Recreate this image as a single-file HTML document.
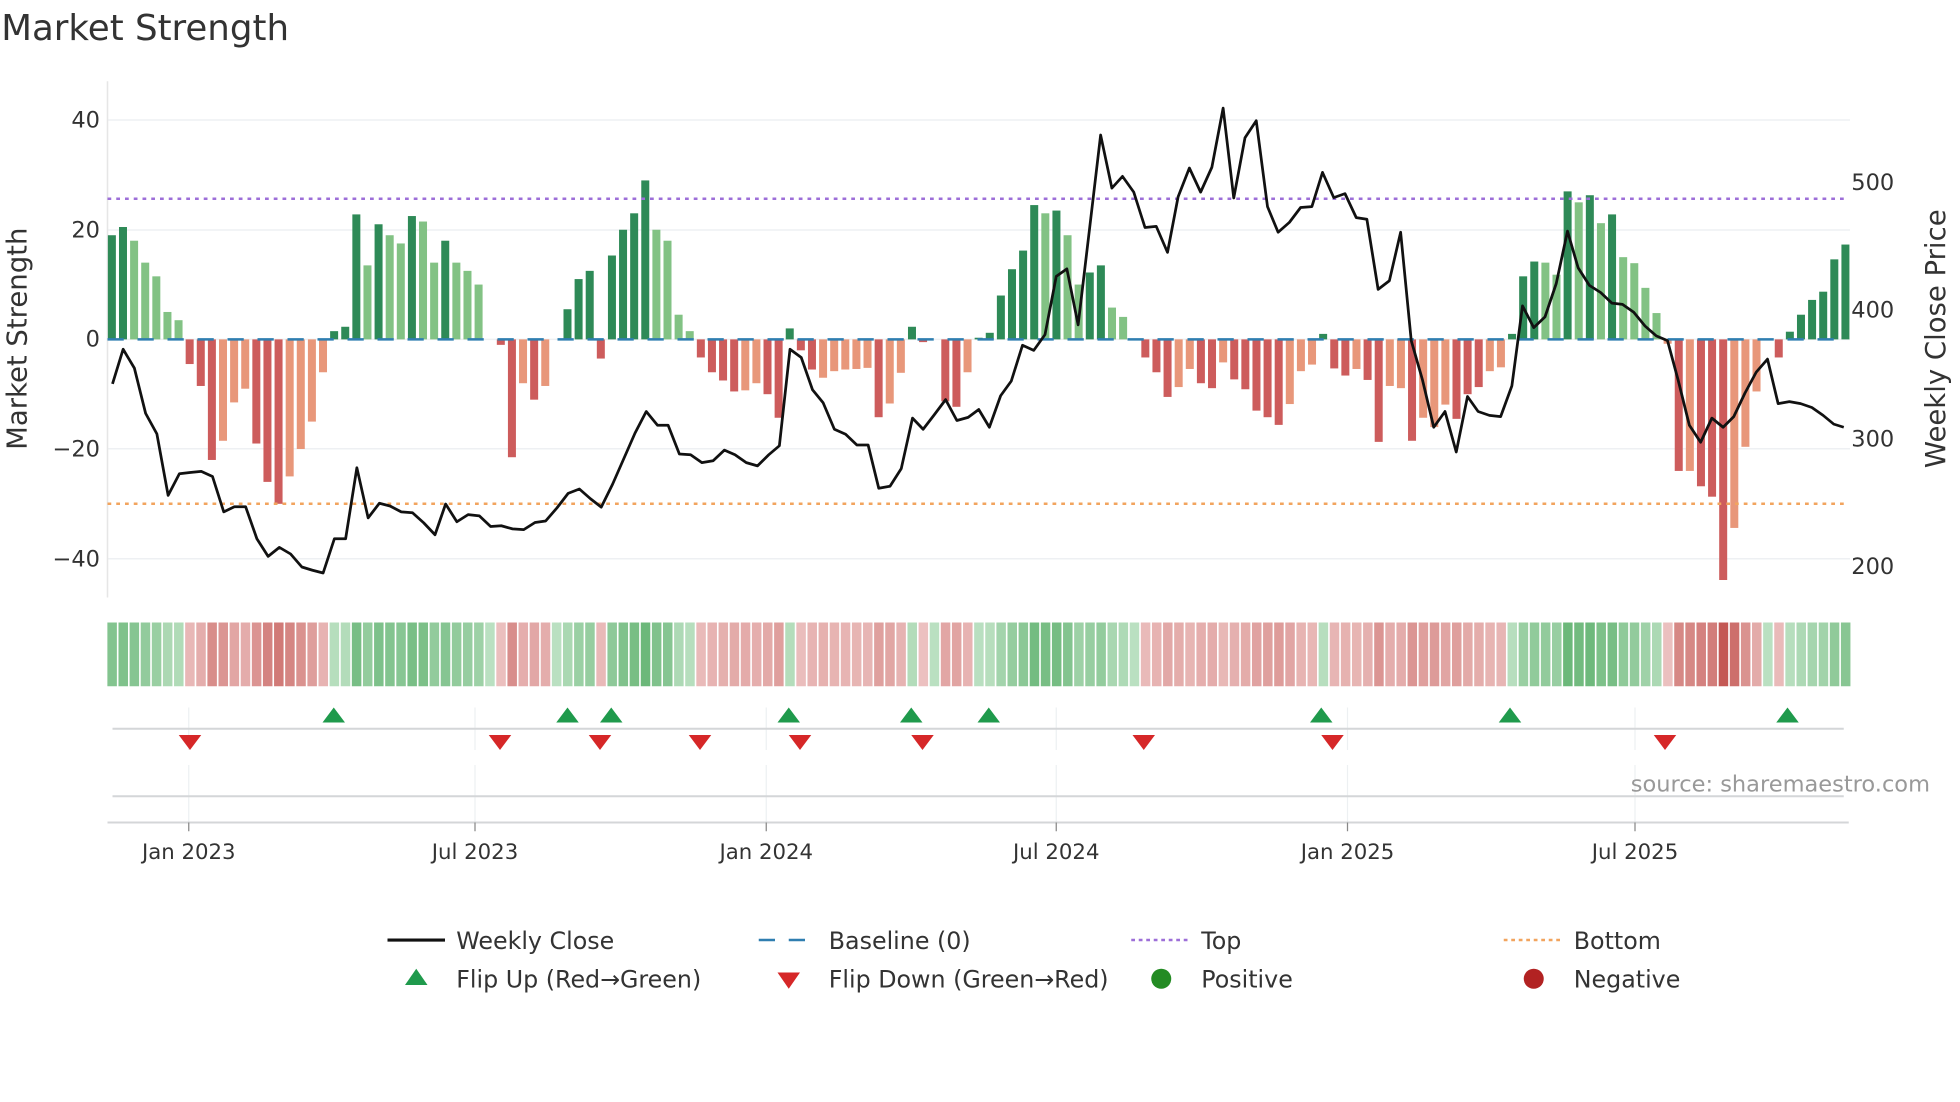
<!DOCTYPE html>
<html><head><meta charset="utf-8">
<style>
html,body{margin:0;padding:0;background:#fff;}
svg{display:block;font-family:"DejaVu Sans","Liberation Sans",sans-serif;}
</style></head>
<body>
<svg id="s" width="1960" height="1102" viewBox="0 0 1568 881.6" xmlns="http://www.w3.org/2000/svg">
<rect width="1568" height="882" fill="#fff"/>
<text x="1" y="32" font-size="28.5" fill="#333">Market Strength</text>
<g stroke="#eef0f3" stroke-width="1.2">
<line x1="86" y1="96" x2="1480" y2="96"/><line x1="86" y1="184" x2="1480" y2="184"/>
<line x1="86" y1="271.5" x2="1480" y2="271.5"/><line x1="86" y1="359" x2="1480" y2="359"/>
<line x1="86" y1="447" x2="1480" y2="447"/>
</g>
<line x1="86" y1="65" x2="86" y2="478" stroke="#e6e6e6" stroke-width="1.2"/>
<g font-size="18" fill="#333" text-anchor="end">
<text x="80" y="102">40</text><text x="80" y="190">20</text><text x="80" y="277">0</text>
<text x="80" y="365">−20</text><text x="80" y="453">−40</text>
</g>
<g font-size="18" fill="#333">
<text x="1481" y="152">500</text><text x="1481" y="254">400</text><text x="1481" y="357">300</text><text x="1481" y="459">200</text>
</g>
<text transform="translate(21,271) rotate(-90)" font-size="22" fill="#333" text-anchor="middle">Market Strength</text>
<text transform="translate(1556,271) rotate(-90)" font-size="22" fill="#333" text-anchor="middle">Weekly Close Price</text>
<g id="bars"></g>
<line x1="86" y1="271.5" x2="1478" y2="271.5" stroke="#2f7eb0" stroke-width="2" stroke-dasharray="13 11"/>
<line x1="86" y1="159" x2="1478" y2="159" stroke="#9d6fd8" stroke-width="2" stroke-dasharray="3 4"/>
<line x1="86" y1="403" x2="1478" y2="403" stroke="#f2a45e" stroke-width="2" stroke-dasharray="3 4"/>
<polyline id="price" fill="none" stroke="#111" stroke-width="2.2" stroke-linejoin="round"/>
<g id="rib"></g>
<g stroke="#edf0f2" stroke-width="1">
<line x1="151" y1="566" x2="151" y2="600"/><line x1="380" y1="566" x2="380" y2="600"/><line x1="613" y1="566" x2="613" y2="600"/>
<line x1="845" y1="566" x2="845" y2="600"/><line x1="1078" y1="566" x2="1078" y2="600"/><line x1="1308" y1="566" x2="1308" y2="600"/>
<line x1="151" y1="612" x2="151" y2="658"/><line x1="380" y1="612" x2="380" y2="658"/><line x1="613" y1="612" x2="613" y2="658"/>
<line x1="845" y1="612" x2="845" y2="658"/><line x1="1078" y1="612" x2="1078" y2="658"/><line x1="1308" y1="612" x2="1308" y2="658"/>
</g>
<line x1="90" y1="583" x2="1475" y2="583" stroke="#d4d6d8" stroke-width="1.6"/>
<line x1="90" y1="637" x2="1475" y2="637" stroke="#d4d6d8" stroke-width="1.6"/>
<line x1="86" y1="658" x2="1479" y2="658" stroke="#d4d6d8" stroke-width="1.6"/>
<g stroke="#888" stroke-width="1">
<line x1="151" y1="658" x2="151" y2="665"/><line x1="380" y1="658" x2="380" y2="665"/><line x1="613" y1="658" x2="613" y2="665"/>
<line x1="845" y1="658" x2="845" y2="665"/><line x1="1078" y1="658" x2="1078" y2="665"/><line x1="1308" y1="658" x2="1308" y2="665"/>
</g>
<g id="tri"></g>
<text x="1544" y="633" font-size="18" fill="#999" text-anchor="end">source: sharemaestro.com</text>
<g font-size="17" fill="#333" text-anchor="middle">
<text x="151" y="687">Jan 2023</text><text x="380" y="687">Jul 2023</text><text x="613" y="687">Jan 2024</text>
<text x="845" y="687">Jul 2024</text><text x="1078" y="687">Jan 2025</text><text x="1308" y="687">Jul 2025</text>
</g>
<g font-size="19" fill="#333">
<line x1="310" y1="752" x2="356" y2="752" stroke="#111" stroke-width="2.5"/>
<text x="365" y="759">Weekly Close</text>
<line x1="607" y1="752" x2="652" y2="752" stroke="#2f7eb0" stroke-width="2" stroke-dasharray="13 11"/>
<text x="663" y="759">Baseline (0)</text>
<line x1="905" y1="752" x2="950" y2="752" stroke="#9d6fd8" stroke-width="2" stroke-dasharray="3 3"/>
<text x="961" y="759">Top</text>
<line x1="1203" y1="752" x2="1248" y2="752" stroke="#f2a45e" stroke-width="2" stroke-dasharray="3 3"/>
<text x="1259" y="759">Bottom</text>
<polygon points="324,788 342,788 333,775" fill="#1f9a4c"/>
<text x="365" y="790">Flip Up (Red→Green)</text>
<polygon points="622,778 640,778 631,791" fill="#d62728"/>
<text x="663" y="790">Flip Down (Green→Red)</text>
<circle cx="929" cy="783" r="8" fill="#238b23"/>
<text x="961" y="790">Positive</text>
<circle cx="1227" cy="783" r="8" fill="#b22222"/>
<text x="1259" y="790">Negative</text>
</g>
</svg>
<script>
(function(){
var NS="http://www.w3.org/2000/svg";
var V=[19,'D',20.5,'D',18,'L',14,'L',11.5,'L',5,'L',3.5,'L',-4.5,'D',-8.5,'D',-22,'D',-18.5,'L',-11.5,'L',-9,'L',-19,'D',-26,'D',-30,'D',-25,'L',-20,'L',-15,'L',-6,'L',1.5,'D',2.3,'D',22.8,'D',13.5,'L',21,'D',19,'L',17.5,'L',22.5,'D',21.5,'L',14,'L',18,'D',14,'L',12.5,'L',10,'L',0,'D',-1,'D',-21.5,'D',-8,'L',-11,'D',-8.5,'L',0,'D',5.5,'D',11,'D',12.5,'D',-3.5,'D',15.3,'D',20,'D',23,'D',29,'D',20,'L',18,'L',4.5,'L',1.5,'L',-3.3,'D',-6,'D',-7.5,'D',-9.5,'D',-9.3,'L',-8,'L',-10,'D',-14.3,'D',2,'D',-2,'D',-5.5,'D',-7,'L',-5.8,'L',-5.5,'L',-5.4,'L',-5.2,'L',-14.2,'D',-11.7,'L',-6.1,'L',2.3,'D',-0.5,'D',0,'D',-11.3,'D',-12.3,'D',-6,'L',0.3,'D',1.2,'D',8,'D',12.8,'D',16.2,'D',24.5,'D',23,'L',23.5,'D',19,'L',10,'L',12.2,'D',13.5,'D',5.8,'L',4.1,'L',0,'D',
-3.3,'D',-6,'D',-10.5,'D',-8.7,'L',-5.4,'L',-8,'D',-8.9,'D',-4.2,'L',-7.3,'D',-9.1,'D',-13,'D',-14.2,'D',-15.6,'D',-11.8,'L',-5.8,'L',-4.6,'L',1,'D',-5.3,'D',-6.6,'D',-5.4,'L',-7.4,'D',-18.7,'D',-8.5,'L',-8.9,'L',-18.5,'D',-14.3,'L',-16,'L',-11.9,'L',-14.5,'D',-10,'D',-8.7,'D',-5.8,'L',-5.1,'L',1,'D',11.5,'D',14.2,'D',14,'L',11.8,'L',27,'D',25,'L',26.3,'D',21.2,'L',22.8,'D',15,'L',13.9,'L',9.4,'L',4.8,'L',-0.8,'L',-24,'D',-24,'L',-26.8,'D',-28.7,'D',-43.9,'D',-34.4,'L',-19.6,'L',-9.5,'L',0,'D',-3.3,'D',1.4,'D',4.5,'D',7.2,'D',8.7,'D',14.6,'D',17.3,'D'];
var bars=document.getElementById('bars'),rib=document.getElementById('rib');
var n=V.length/2, step=8.89, x0=89.5, z=271.5, k=87.7/20;
function lerp(a,b,t){return Math.round(a+(b-a)*t);}
for(var i=0;i<n;i++){
 var v=V[2*i],t=V[2*i+1],cx=x0+i*step;
 if(v!==0){
  var r=document.createElementNS(NS,'rect');
  var h=Math.abs(v)*k;
  r.setAttribute('x',cx-3.2);r.setAttribute('width',6.4);
  r.setAttribute('y',v>0?z-h:z);r.setAttribute('height',h);
  r.setAttribute('fill',v>0?(t=='D'?'#2e8a57':'#82c284'):(t=='D'?'#cd5c5c':'#e8977a'));
  bars.appendChild(r);
 }
 var c=document.createElementNS(NS,'rect');
 c.setAttribute('x',cx-3.6);c.setAttribute('width',7.6);c.setAttribute('y',498);c.setAttribute('height',51);
 var col;
 if(v>=0){var q=0.25+0.75*Math.min(v/27,1);col='rgb('+lerp(212,108,q)+','+lerp(237,184,q)+','+lerp(216,122,q)+')';}
 else{var q=0.2+0.8*Math.min(-v/44,1);col='rgb('+lerp(246,196,q)+','+lerp(220,88,q)+','+lerp(220,84,q)+')';}
 c.setAttribute('fill',col);rib.appendChild(c);
}
var P1=[180,970,197,882,215,930,233,1045,251,1097,269,1253,287,1198,304,1195,322,1192,340,1205,358,1295,375,1282,393,1282,411,1363,429,1408,447,1385,465,1402,483,1435,500,1443,517,1450,535,1363,553,1363,571,1183,589,1310,607,1273,624,1280,642,1295,660,1297,678,1323,696,1353,713,1275,731,1320,749,1302,767,1305,785,1332,802,1330,820,1338,838,1340,856,1322,873,1318,891,1285,909,1248,927,1237,945,1262,962,1283,980,1225,998,1160,1016,1095,1034,1040,1052,1075,1069,1075,1087,1148,1105,1150,1123,1170,1141,1165,1159,1138,1176,1150,1194,1170,1212,1178,1230,1150,1247,1127,1264,882,1282,903,1300,985,1317,1018,1335,1085,1353,1098,1371,1125,1389,1125,1406,1235,1424,1230,1442,1185,1460,1057,1477,1085,1495,1048,1513,1010,1531,1063,1549,1055];
var P2=[-2,1035,15,1080,33,1000,50,963,68,872,86,885,104,845,122,697,139,678,157,820,175,580,193,338,211,473,228,443,246,483,264,573,282,570,300,636,317,495,335,422,353,483,371,420,389,270,406,498,424,345,442,302,460,520,477,585,495,560,513,522,531,520,548,433,566,497,584,487,602,548,619,552,637,730,655,708,673,585,690,860,708,960,726,1080,744,1040,762,1143,780,1002,797,1040,815,1050,833,1053,851,975,868,772,886,827,904,800,922,715,940,582,957,675,975,720,993,738,1011,765,1028,768,1046,788,1064,823,1082,848,1100,860,1117,960,1135,1075,1153,1118,1171,1057,1189,1080,1206,1053,1224,993,1242,940,1260,907,1277,1020,1295,1015,1313,1020,1331,1030,1349,1050,1366,1072,1382,1080];
function Y(q){return (96+(q-300)*0.3151).toFixed(1);}
var pts=[];
for(var i=0;i<P1.length;i+=2)pts.push((P1[i]/2).toFixed(1)+','+Y(P1[i+1]));
for(var i=0;i<P2.length;i+=2)pts.push((784+P2[i]/2).toFixed(1)+','+Y(P2[i+1]));
document.getElementById('price').setAttribute('points',pts.join(' '));
var tri=document.getElementById('tri');
[267,454,489,631,729,791,1057,1208,1430].forEach(function(x){
 var p=document.createElementNS(NS,'polygon');p.setAttribute('points',(x-9)+',578 '+(x+9)+',578 '+x+',566');p.setAttribute('fill','#1f9a4c');tri.appendChild(p);});
[152,400,480,560,640,738,915,1066,1332].forEach(function(x){
 var p=document.createElementNS(NS,'polygon');p.setAttribute('points',(x-9)+',588 '+(x+9)+',588 '+x+',600');p.setAttribute('fill','#d62728');tri.appendChild(p);});
})();
</script>
</body></html>
